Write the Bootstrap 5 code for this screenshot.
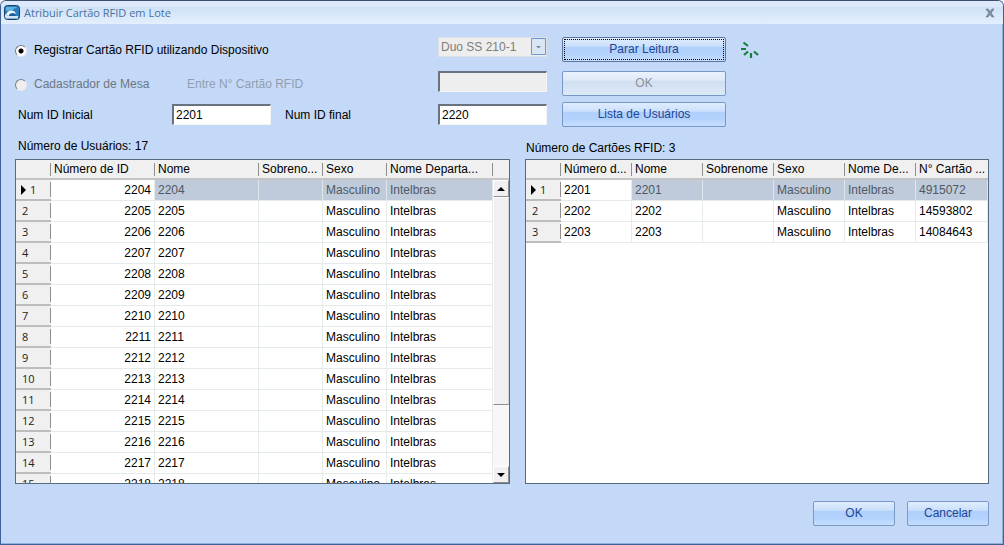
<!DOCTYPE html>
<html lang="pt-BR">
<head>
<meta charset="utf-8">
<meta name="viewport" content="width=device-width, initial-scale=1">
<title>Atribuir Cartão RFID em Lote</title>
<link href="https://cdn.jsdelivr.net/npm/bootstrap@5.3.0/dist/css/bootstrap.min.css" rel="stylesheet">
<style>
  body { font: 12px/16px "Liberation Sans", Arial, sans-serif; color: #000; background: #f4f7fc; }
  .dialog { background: #c3d9f7; border: 1px solid #3f6094; border-top-color: #3d4f6e; border-radius: 6px 6px 0 0; box-shadow: inset -1px -1px #8fb0dd; min-height: 440px; }
  .titlebar { height: 23px; border-radius: 5px 5px 0 0; padding: 0 8px 0 3px; color: #47729f;
    background: linear-gradient(#dce9fc 0 6px, #cfe1f6 6px, #e3effd 100%); }
  .titlebar h1 { font: 11px/25px "Open Sans", "Noto Sans", sans-serif; }
  .close-x { border: 0; background: none; padding: 0; line-height: 0; }
  .dialog-main { padding: 13px 14px 0; min-height: 0; }
  .form-line label { line-height: 23px; padding-top: 2px; }
  .line-a { margin-bottom: 9px; }
  .line-b { margin-bottom: 6px; }
  .col-first { width: 157px; padding-left: 3px; }
  .col-wide { width: 423px; }
  .col-option { width: 172px; }
  .col-hint { width: 251px; color: #929eb0; }
  .col-second { width: 153px; margin-left: 14px; }
  .option-off { color: #6d7684; }
  .w-short { width: 99px; }
  .w-field { width: 109px; }
  .w-action { width: 164px; margin-left: 15px; }
  .w-foot { width: 82px; }
  .radio-dot { appearance: none; width: 12px; height: 12px; margin: 0 7px 0 0; border-radius: 50%; background: #fff; border: 1px solid; border-color: #7b7f86 #e8eaec #e8eaec #7b7f86; }
  .radio-dot:checked { background: radial-gradient(circle, #000 0 2px, #fff 3px); }
  .radio-dot:disabled { background: #f0efee; opacity: 1; }
  .sunken { height: 21px; padding: 0 2px; font-size: 12px; line-height: 17px; color: #000; background: #fff; border: solid; border-width: 2px 1px 1px 2px; border-color: #69727f #f5f5f5 #f5f5f5 #69727f; border-radius: 0; }
  .sunken:disabled { background: #eee; }
  .device { appearance: none; height: 20px; padding: 0 2px; font-size: 12px; line-height: 18px; color: #7d7d7d; opacity: 1; border: 1px solid #dde0e4; border-radius: 0;
    background: #eee url("data:image/svg+xml,%3Csvg xmlns='http://www.w3.org/2000/svg' width='15' height='17'%3E%3Cpath d='M.5.5h14v16H.5z' fill='%23dbe6f5' stroke='%236f98ce'/%3E%3Cpath d='M5 8h5L7.500 10.500z' fill='%237b8794'/%3E%3C/svg%3E") no-repeat right 0 top 0; }
  .glossy { height: 25px; padding: 0; font-size: 12px; line-height: 23px; color: #1c4594; border: 1px solid #7899c8; border-radius: 2px;
    background: linear-gradient(#e0edfe, #cbe0fc 36%, #b0cffb 40%, #b3d2fc 70%, #c6defd); }
  .glossy:disabled { color: #8c9099; border-color: #7899c8; opacity: 1; background: linear-gradient(#e9f2fd, #dfeafa 36%, #d0dff1 40%, #dce9f9); }
  .glossy-focus { border-color: #5a76a3; outline: 1px dotted #000; outline-offset: -3px; }
  .spinner-svg { margin: 4px 0 0 14px; }
  .panes { display: grid; grid-template-columns: 495fr 464fr; column-gap: 15px; min-height: 0; }
  .pane { min-height: 0; }
  .pane-title { height: 32px; }
  .title-left { padding: 11px 0 0 3px; }
  .title-right { padding: 13px 0 0 1px; }
  .sheet { flex: 1 1 0; background: #fff; border: 1px solid #59697f; overflow: hidden; min-height: 0; }
  .sheet table { table-layout: fixed; width: 100%; border-collapse: separate; border-spacing: 0; }
  .sheet th, .sheet td { padding: 0 3px; height: 21px; line-height: 20px; font-weight: 400; white-space: nowrap; overflow: hidden; }
  .sheet td { border-right: 1px solid #e4ebe8; border-bottom: 1px solid #e4ebe8; }
  .sheet thead th { height: 20px; line-height: 17px; border-bottom: 2px solid #c4c4c4;
    background: linear-gradient(#8f8f8f, #8f8f8f) no-repeat right 3px / 1px 13px #f0f0f0; }
  .sheet thead th:last-child { padding-right: 0; }
  .pane-right thead th:last-child { background: #f0f0f0; }
  .sheet tbody th { padding-left: 6px; font: 11px/18px "Open Sans", "Noto Sans", sans-serif; color: #222; border-bottom: 2px solid #bdbdbd;
    background: linear-gradient(#8f8f8f, #8f8f8f) no-repeat right 2px / 1px 15px #f0f0f0; }
  .sheet .picked td:not(:nth-child(2)) { color: #4d5966; background: #bfcbda; border-right-color: #dfe6ed; }
  .row-arrow { display: inline-block; margin: 0 4px 0 -1px; border: solid transparent; border-width: 5px 0 5px 5px; border-left-color: #000; vertical-align: -1px; }
  .scroller { width: 16px; }
  .scroll-cap { height: 20px; background: #f0f0f0; border-bottom: 2px solid #c4c4c4; }
  .scroll-end { height: 17px; padding: 0; line-height: 0; background: #f0f0f0; border: 1px solid; border-color: #fff #8d8d8d #8d8d8d #fff; }
  .scroll-thumb { flex: 208 0 0; background: #f0f0f0; border: 1px solid; border-color: #fff #d4d4d4 #8d8d8d #fff; }
  .scroll-track { flex: 61 0 0; background: #f7f7f7; }
  .dialog-foot { gap: 12px; padding: 17px 14px 18px; }
</style>
</head>
<body>
<main class="dialog vh-100 d-flex flex-column">
  <header class="titlebar d-flex align-items-center justify-content-between">
    <div class="d-flex align-items-center">
      <svg class="me-1" width="16" height="16" viewBox="0 0 16 16" aria-hidden="true">
        <rect x=".5" y=".5" width="15" height="14" rx="3" fill="#2a7fc0" stroke="#1d3f66"/>
        <path d="M2 2h11L8 5 2 6z" fill="#5db4e2"/>
        <path d="M2 10c1-4 5-6 9-3l1 2c-3-2-6-1-7 2z" fill="#eef8fc"/>
        <path d="M1 9l3 2h10v2.500H2L1 12z" fill="#d3e6f1"/>
        <path d="M5 10c2-2 5-2 7 1H5z" fill="#1d5c98"/>
      </svg>
      <h1 class="m-0">Atribuir Cartão RFID em Lote</h1>
    </div>
    <button type="button" class="close-x" aria-label="Fechar">
      <svg width="10" height="10" viewBox="0 0 10 10"><path d="M1 1h2l2 2.500L7 1h2L6.200 5 9 9H7L5 6.500 3 9H1l2.800-4z" fill="#8391a8" stroke="#64728c" stroke-width=".6"/></svg>
    </button>
  </header>

  <form class="dialog-main d-flex flex-column flex-grow-1">
    <div class="form-line line-a d-flex align-items-start">
      <label class="col-wide d-flex align-items-center"><input class="radio-dot" type="radio" name="origem" checked>Registrar Cartão RFID utilizando Dispositivo</label>
      <select class="device w-field" aria-label="Dispositivo" disabled><option>Duo SS 210-1</option></select>
      <button type="button" class="btn glossy glossy-focus w-action">Parar Leitura</button>
      <svg class="spinner-svg" width="22" height="18" viewBox="0 0 22 18" role="img" aria-label="Lendo">
        <path d="M3.500 1.500l4.500 3.500M1 8h5M4 14l4-3.500M11 12v5M14 10.500l4 3.500" fill="none" stroke="#15803c" stroke-width="2.200"/>
      </svg>
    </div>
    <div class="form-line line-b d-flex align-items-start">
      <label class="col-option option-off d-flex align-items-center"><input class="radio-dot" type="radio" name="origem" disabled>Cadastrador de Mesa</label>
      <label class="col-hint" for="cartao">Entre N° Cartão RFID</label>
      <input id="cartao" class="sunken w-field" type="text" disabled>
      <button type="button" class="btn glossy w-action" disabled>OK</button>
    </div>
    <div class="form-line d-flex align-items-center">
      <label class="col-first" for="inicial">Num ID Inicial</label>
      <input id="inicial" class="sunken w-short" type="text" value="2201">
      <label class="col-second" for="final">Num ID final</label>
      <input id="final" class="sunken w-field" type="text" value="2220">
      <button type="button" class="btn glossy w-action">Lista de Usuários</button>
    </div>

    <div class="panes flex-grow-1">
      <section class="pane d-flex flex-column">
        <div class="pane-title title-left">Número de Usuários: 17</div>
        <div class="sheet d-flex">
          <div class="flex-grow-1">
            <table>
              <colgroup><col style="width:35px"><col style="width:104px"><col style="width:104px"><col style="width:64px"><col style="width:64px"><col style="width:106px"></colgroup>
              <thead><tr><th></th><th>Número de ID</th><th>Nome</th><th>Sobreno...</th><th>Sexo</th><th>Nome Departa...</th></tr></thead>
              <tbody id="usuarios"></tbody>
            </table>
          </div>
          <div class="scroller d-flex flex-column flex-shrink-0">
            <div class="scroll-cap"></div>
            <button type="button" class="scroll-end" aria-label="Rolar para cima"><svg width="8" height="4"><path d="M0 4l4-4 4 4z"/></svg></button>
            <div class="scroll-thumb"></div>
            <div class="scroll-track"></div>
            <button type="button" class="scroll-end" aria-label="Rolar para baixo"><svg width="8" height="4"><path d="M0 0l4 4 4-4z"/></svg></button>
          </div>
        </div>
      </section>
      <section class="pane pane-right d-flex flex-column">
        <div class="pane-title title-right">Número de Cartões RFID: 3</div>
        <div class="sheet">
          <table>
            <colgroup><col style="width:35px"><col style="width:71px"><col style="width:71px"><col style="width:71px"><col style="width:71px"><col style="width:71px"><col style="width:72px"></colgroup>
            <thead><tr><th></th><th>Número d...</th><th>Nome</th><th>Sobrenome</th><th>Sexo</th><th>Nome De...</th><th>N° Cartão ...</th></tr></thead>
            <tbody id="cartoes"></tbody>
          </table>
        </div>
      </section>
    </div>
  </form>

  <footer class="dialog-foot d-flex justify-content-end">
    <button type="button" class="btn glossy w-foot">OK</button>
    <button type="button" class="btn glossy w-foot">Cancelar</button>
  </footer>
</main>
<script src="https://cdn.jsdelivr.net/npm/bootstrap@5.3.0/dist/js/bootstrap.bundle.min.js"></script>
<script>
  const line = (i, id, idClass, extra) =>
    `<tr class="${i ? '' : 'picked'}"><th scope="row">${i ? '' : '<span class="row-arrow"></span>'}${i + 1}</th>` +
    `<td class="${idClass}">${id}</td><td>${id}</td><td></td><td>Masculino</td><td>Intelbras</td>${extra}</tr>`;
  document.getElementById('usuarios').innerHTML =
    Array.from({ length: 17 }, (_, i) => line(i, 2204 + i, 'text-end', '')).join('');
  document.getElementById('cartoes').innerHTML =
    ['4915072', '14593802', '14084643'].map((card, i) => line(i, 2201 + i, '', `<td>${card}</td>`)).join('');
</script>
</body>
</html>
